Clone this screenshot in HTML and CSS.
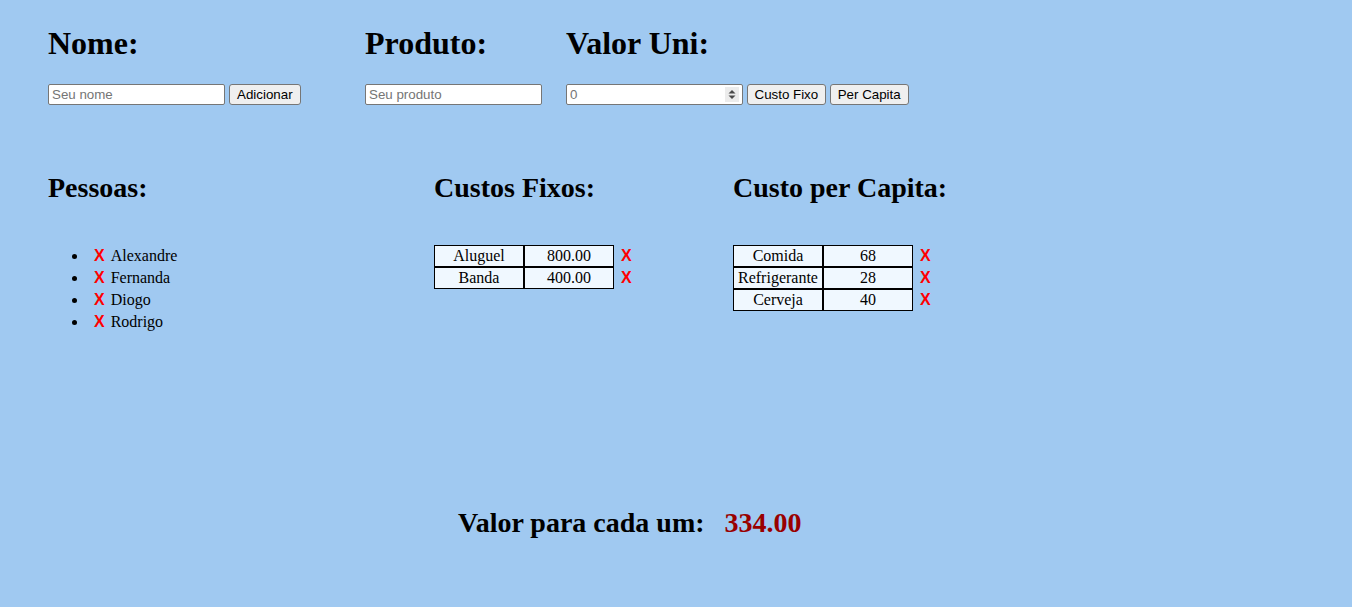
FILE: index.html
```html
<!DOCTYPE html>
<html lang="pt">
<head>
<meta charset="utf-8">
<title>Divisão de contas</title>
<link rel="stylesheet" href="styles.css">
</head>
<body>
<div class="page">
  <section class="form-row">
    <div class="field field-nome">
      <h1 class="big-title">Nome:</h1>
      <div class="controls">
        <input class="text-input" type="text" placeholder="Seu nome">
        <button class="btn btn-wide">Adicionar</button>
      </div>
    </div>
    <div class="field field-produto">
      <h1 class="big-title">Produto:</h1>
      <div class="controls">
        <input class="text-input" type="text" placeholder="Seu produto">
      </div>
    </div>
    <div class="field field-valor">
      <h1 class="big-title">Valor Uni:</h1>
      <div class="controls">
        <span class="number-wrap">
          <input class="text-input number-input" type="number" placeholder="0">
          <svg class="spinner" width="14" height="15" viewBox="0 0 14 15" aria-hidden="true">
            <rect x="0" y="0" width="14" height="15" fill="#ececec"/>
            <path d="M3.5 6.5 L7 3 L10.5 6.5 Z" fill="#4a4a4a"/>
            <path d="M3.5 8.5 L7 12 L10.5 8.5 Z" fill="#4a4a4a"/>
          </svg>
        </span>
        <button class="btn">Custo Fixo</button>
        <button class="btn btn-wide">Per Capita</button>
      </div>
    </div>
  </section>

  <section class="lists-row">
    <div class="col col-pessoas">
      <h2 class="mid-title">Pessoas:</h2>
      <ul class="people">
        <li><span class="del">X</span>Alexandre</li>
        <li><span class="del">X</span>Fernanda</li>
        <li><span class="del">X</span>Diogo</li>
        <li><span class="del">X</span>Rodrigo</li>
      </ul>
    </div>
    <div class="col col-fixos">
      <h2 class="mid-title">Custos Fixos:</h2>
      <table class="costs">
        <tr><td class="cell">Aluguel</td><td class="cell">800.00</td><td class="del-cell"><span class="del">X</span></td></tr>
        <tr><td class="cell">Banda</td><td class="cell">400.00</td><td class="del-cell"><span class="del">X</span></td></tr>
      </table>
    </div>
    <div class="col col-capita">
      <h2 class="mid-title">Custo per Capita:</h2>
      <table class="costs">
        <tr><td class="cell">Comida</td><td class="cell">68</td><td class="del-cell"><span class="del">X</span></td></tr>
        <tr><td class="cell">Refrigerante</td><td class="cell">28</td><td class="del-cell"><span class="del">X</span></td></tr>
        <tr><td class="cell">Cerveja</td><td class="cell">40</td><td class="del-cell"><span class="del">X</span></td></tr>
      </table>
    </div>
  </section>

  <section class="result">
    <h2 class="mid-title">Valor para cada um:</h2>
    <span class="mid-title total">334.00</span>
  </section>
</div>
</body>
</html>
```

FILE: styles.css
```css
html, body {
  margin: 0;
  padding: 0;
  background: #a0c9f1;
}

body {
  font-family: "Liberation Serif", "Times New Roman", serif;
  font-size: 16px;
  color: #000;
  width: 1352px;
  height: 607px;
  overflow: hidden;
}

.page {
  padding: 25px 0 0 48px;
}

/* top form */
.form-row {
  display: flex;
}

.field-nome { width: 317px; }
.field-produto { width: 201px; }

.big-title {
  margin: 0 0 22px;
  font-size: 32px;
  line-height: 37px;
  font-weight: bold;
}

.controls {
  display: flex;
  align-items: center;
  gap: 4px;
  height: 21px;
}

.text-input {
  box-sizing: border-box;
  width: 177px;
  height: 21px;
  margin: 0;
  padding: 1px 3px;
  border: 1px solid #767676;
  border-radius: 2px;
  background: #fff;
  font-family: "Liberation Sans", Arial, sans-serif;
  font-size: 13.33px;
  color: #000;
}

.text-input::placeholder {
  color: #757575;
}

.number-input {
  -moz-appearance: textfield;
}

.number-input::-webkit-inner-spin-button,
.number-input::-webkit-outer-spin-button {
  -webkit-appearance: none;
  margin: 0;
}

.number-wrap {
  position: relative;
  display: block;
  width: 177px;
  height: 21px;
}

.spinner {
  position: absolute;
  left: 159px;
  top: 3px;
}

.btn {
  box-sizing: border-box;
  height: 21px;
  margin: 0;
  padding: 1px 6.5px;
  border: 1px solid #767676;
  border-radius: 3px;
  background: #efefef;
  font-family: "Liberation Sans", Arial, sans-serif;
  font-size: 13.33px;
  line-height: 17px;
  color: #000;
}

.btn-wide {
  padding: 1px 7px;
}

/* lists */
.lists-row {
  display: flex;
  margin-top: 67px;
}

.col-pessoas { width: 386px; }
.col-fixos { width: 299px; }

.mid-title {
  margin: 0;
  font-size: 28px;
  line-height: 32px;
  font-weight: bold;
}

.people {
  margin: 41px 0 0;
  padding: 0 0 0 40px;
  list-style: disc;
}

.people li {
  line-height: 22px;
  height: 22px;
}

.del {
  display: inline-block;
  padding: 0 6px;
  font-family: "Liberation Sans", Arial, sans-serif;
  font-size: 16px;
  font-weight: bold;
  color: #ff0000;
  line-height: 20px;
  vertical-align: top;
}

.people .del {
  line-height: 22px;
}

.costs {
  margin-top: 41px;
  border-collapse: separate;
  border-spacing: 0;
}

.cell {
  box-sizing: border-box;
  width: 90px;
  height: 22px;
  padding: 0 1px;
  border: 1px solid #000;
  background: #f0f8ff;
  text-align: center;
  line-height: 20px;
}

.del-cell {
  padding: 0 0 0 1px;
  height: 22px;
}

/* result */
.result {
  display: flex;
  gap: 20px;
  margin: 174px 0 0 410px;
}

.total {
  color: #990000;
}
```
